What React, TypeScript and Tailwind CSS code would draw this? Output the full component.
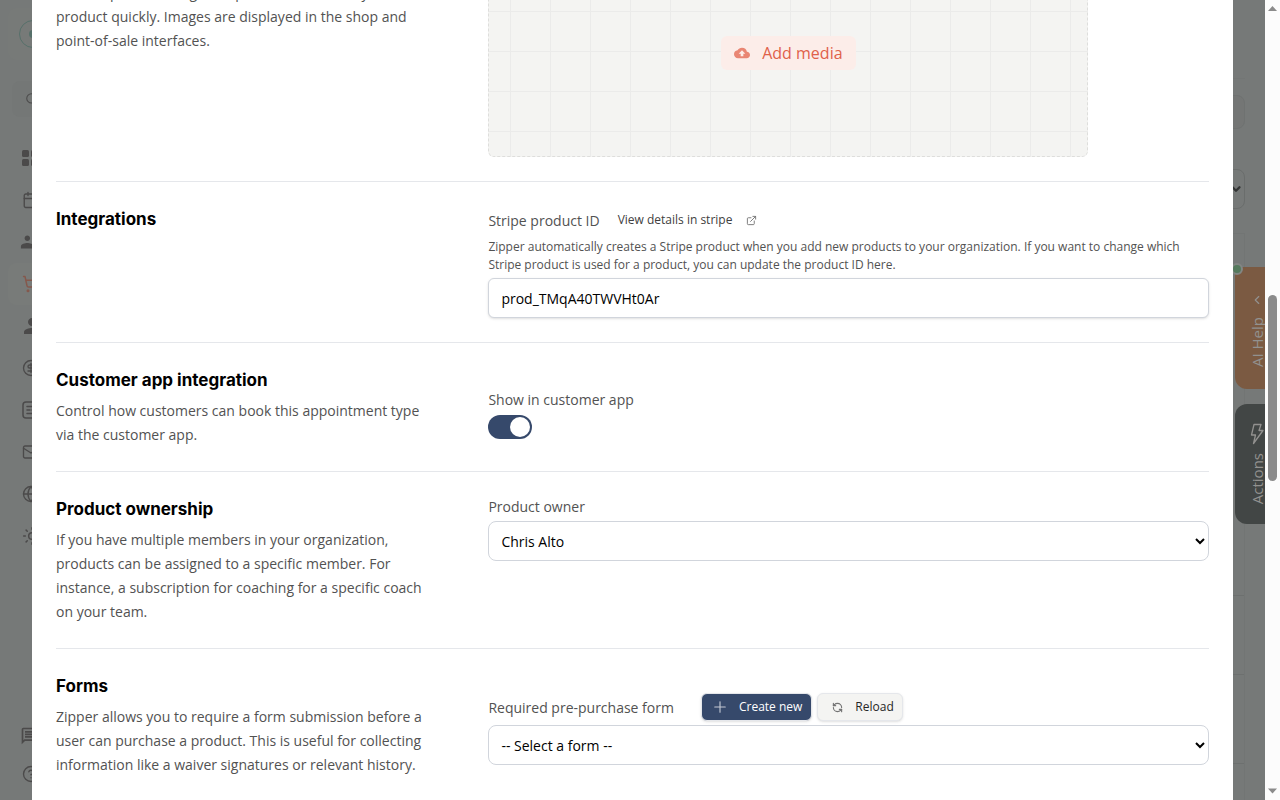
import React from 'react';
import {
  Calendar,
  ChevronDown,
  ChevronLeft,
  CircleDollarSign,
  CircleQuestionMark,
  Globe,
  Mail,
  Plus,
  RefreshCcw,
  Search,
  ShoppingCart,
  Sun,
} from 'lucide-react';
import { FiExternalLink } from 'react-icons/fi';
import { MdCloudUpload, MdGroup, MdOutlineMessage, MdPerson } from 'react-icons/md';

const GridIcon = () => (
  <svg width="18" height="18" viewBox="0 0 18 18" fill="currentColor">
    <rect x="0" y="1" width="7" height="7" rx="1.5" />
    <rect x="9" y="1" width="7" height="7" rx="1.5" />
    <rect x="0" y="10" width="7" height="7" rx="1.5" />
    <rect x="9" y="10" width="7" height="7" rx="1.5" />
  </svg>
);

const ListIcon = () => (
  <svg width="18" height="18" viewBox="0 0 18 18" fill="none" stroke="currentColor" strokeWidth="1.5">
    <rect x="1" y="1" width="16" height="16" rx="3" />
    <path d="M5 5.5h8M5 9h3M10 9h3M5 12.5h6" strokeLinecap="round" />
  </svg>
);

const BoltIcon = () => (
  <svg width="14" height="22" viewBox="0 0 14 22" fill="none" stroke="currentColor" strokeWidth="1.3" strokeLinejoin="round">
    <path d="M4 1.5h7L9 7.5h4L3.500 20.500 5.500 12H1.500z" />
  </svg>
);

const navItems = [
  { label: 'Dashboard', icon: <GridIcon /> },
  { label: 'Calendar', icon: <Calendar size={18} strokeWidth={1.8} /> },
  { label: 'Customers', icon: <MdGroup size={22} className="-ml-0.5" /> },
  { label: 'Products', icon: <ShoppingCart size={18} strokeWidth={2} />, active: true },
  { label: 'Team', icon: <MdPerson size={24} className="-ml-0.5" /> },
  { label: 'Payments', icon: <CircleDollarSign size={18} strokeWidth={1.8} /> },
  { label: 'Forms', icon: <ListIcon /> },
  { label: 'Messages', icon: <Mail size={18} strokeWidth={1.8} /> },
  { label: 'Website', icon: <Globe size={18} strokeWidth={1.8} /> },
  { label: 'Settings', icon: <Sun size={20} strokeWidth={1.8} /> },
];

const labelClass = 'text-sm leading-[21px] font-medium text-[#525252]';
const selectClass =
  'mt-1 block h-10 w-full rounded-lg border border-gray-300 bg-white px-2 text-sm text-black';

type SectionProps = {
  title: string;
  text?: string;
  className?: string;
  children: React.ReactNode;
};

const Section = ({ title, text, className = '', children }: SectionProps) => (
  <section className={`grid grid-cols-8 py-6 ${className}`}>
    <div className="col-span-3 pr-16">
      <h2 className="font-['Inter',sans-serif] text-[17px] leading-[26px] font-bold text-black">{title}</h2>
      {text && <p className="mt-1.5 text-sm leading-6 text-[#525252]">{text}</p>}
    </div>
    <div className="col-span-5">{children}</div>
  </section>
);

const Sidebar = () => (
  <nav className="flex w-64 shrink-0 flex-col px-2 pt-2 pb-[7px] text-[#4b4a4a]">
    <div className="flex h-[52px] items-center rounded-lg bg-[#777a78] pl-[11px]">
      <span className="flex size-7 items-center justify-center rounded-full border border-[#56706a]">
        <span className="size-2 rounded-full bg-[#56706a]" />
      </span>
    </div>
    <div className="mx-1 mt-[21px] flex h-9 items-center rounded-lg bg-[#747776] pl-[13px]">
      <Search size={14} strokeWidth={1.8} />
    </div>
    <ul className="mt-5">
      {navItems.map((item) => (
        <li
          key={item.label}
          className={
            item.active
              ? 'flex h-[42px] items-center rounded-lg bg-[#787b79] pl-3.5 text-[#85584c]'
              : 'flex h-[42px] items-center pl-3.5'
          }
        >
          {item.icon}
        </li>
      ))}
    </ul>
    <div className="mt-auto">
      <div className="flex h-[38px] items-center pl-3">
        <MdOutlineMessage size={20} />
      </div>
      <div className="flex h-[38px] items-center pl-3.5">
        <CircleQuestionMark size={18} strokeWidth={1.8} />
      </div>
    </div>
  </nav>
);

const PageBehind = () => (
  <main className="flex grow flex-col pr-5">
    <div className="h-[79px] border-b border-[#737675]" />
    <div className="mt-4 h-[34px] rounded-lg border border-[#6f7271] bg-[#747675]" />
    <div className="mt-10 flex h-10 items-center justify-end rounded-lg border border-[#6a6d6c] pr-px">
      <ChevronDown size={14} strokeWidth={4} className="text-[#333534]" />
    </div>
    <div className="mt-6 flex grow flex-col border-t border-r border-[#727574]">
      <div className="h-[362px] border-b border-[#6d706f]" />
      <div className="h-[79px] border-b border-[#6d706f]" />
      <div className="h-[89px] border-b border-[#6d706f]" />
    </div>
  </main>
);

const SideTabs = () => (
  <div className="absolute top-[267px] right-0 flex w-[30px] flex-col gap-[15px] text-[15px] leading-4 font-medium text-[#92918f]">
    <div className="relative flex h-[122px] flex-col items-center gap-2.5 rounded-bl-xl bg-[#7b5a42] pt-[26px] pl-3.5">
      <span className="absolute -top-1 -left-1 size-3 rounded-full border-2 border-[#838684] bg-[#557a5d]" />
      <ChevronLeft size={14} strokeWidth={2} />
      <span className="rotate-180 whitespace-nowrap [writing-mode:vertical-rl]">AI Help</span>
    </div>
    <div className="flex h-[120px] flex-col items-center gap-2 rounded-l-xl bg-[#424645] pt-[19px] pl-3.5">
      <BoltIcon />
      <span className="rotate-180 whitespace-nowrap [writing-mode:vertical-rl]">Actions</span>
    </div>
  </div>
);

const Scrollbar = () => (
  <div className="flex w-[15px] shrink-0 flex-col items-center bg-[#fcfcfc] text-[#8b8b8b]">
    <svg width="15" height="15" viewBox="0 0 15 15" fill="currentColor">
      <path d="M7.500 6l4.500 5H3z" />
    </svg>
    <div className="flex-[280_1_0%]" />
    <div className="w-[9px] flex-[186_1_0%] rounded-full bg-[#8b8b8b]" />
    <div className="flex-[304_1_0%]" />
    <svg width="15" height="15" viewBox="0 0 15 15" fill="currentColor">
      <path d="M7.500 8.500L3 3.500h9z" />
    </svg>
  </div>
);

const ProductModal = () => (
  <div
    role="dialog"
    aria-label="Edit product"
    className="absolute inset-x-8 inset-y-0 divide-y divide-gray-200 overflow-hidden bg-white px-6"
  >
    {/* scrolled part way down the form */}
    <Section
      title="Media"
      text="Custom product images help customers identify the product quickly. Images are displayed in the shop and point-of-sale interfaces."
      className="-mt-[75px]"
    >
      <div className="flex h-52 max-w-[600px] items-center justify-center rounded-md border border-dashed border-[#dededc] bg-[#f4f4f2] bg-[linear-gradient(to_right,#ebebea_1px,transparent_1px),linear-gradient(to_bottom,#ebebea_1px,transparent_1px)] bg-[length:40px_40px] bg-[position:21px_21px]">
        <button
          type="button"
          className="flex h-[34px] items-center gap-3 rounded-md bg-[#fcede9] px-[13px] font-medium text-[#e0614a]"
        >
          <MdCloudUpload size={16} className="text-[#e98673]" />
          Add media
        </button>
      </div>
    </Section>

    <Section title="Integrations">
      <div className="flex h-7 items-center">
        <label htmlFor="stripe-id" className={labelClass}>
          Stripe product ID
        </label>
        <a href="#stripe" className="ml-[18px] flex items-center gap-3.5 text-xs font-medium text-[#404040]">
          View details in stripe
          <FiExternalLink size={11} className="text-[#737373]" />
        </a>
      </div>
      <p className="mt-1 text-xs leading-[18px] text-[#525252]">
        Zipper automatically creates a Stripe product when you add new products to your organization. If you want to
        change which Stripe product is used for a product, you can update the product ID here.
      </p>
      <input
        id="stripe-id"
        type="text"
        defaultValue="prod_TMqA40TWVHt0Ar"
        className="mt-1 block h-10 w-full rounded-md border border-gray-300 bg-white px-3 text-sm text-black shadow-sm"
      />
    </Section>

    <Section
      title="Customer app integration"
      text="Control how customers can book this appointment type via the customer app."
    >
      <div className="flex flex-col items-start gap-[5px] pt-[22px]">
        <label htmlFor="show-in-app" className={labelClass}>
          Show in customer app
        </label>
        <input
          id="show-in-app"
          type="checkbox"
          role="switch"
          defaultChecked
          className="flex h-6 w-11 appearance-none items-center rounded-full bg-gray-300 p-0.5 before:size-5 before:rounded-full before:bg-white checked:justify-end checked:bg-[#36496b]"
        />
      </div>
    </Section>

    <Section
      title="Product ownership"
      text="If you have multiple members in your organization, products can be assigned to a specific member. For instance, a subscription for coaching for a specific coach on your team."
    >
      <label htmlFor="owner" className={`block ${labelClass}`}>
        Product owner
      </label>
      <select id="owner" className={selectClass}>
        <option>Chris Alto</option>
      </select>
    </Section>

    <Section
      title="Forms"
      text="Zipper allows you to require a form submission before a user can purchase a product. This is useful for collecting information like a waiver signatures or relevant history."
    >
      <div className="flex items-center gap-[5px] pt-5">
        <label htmlFor="form" className={`mr-[22px] ${labelClass}`}>
          Required pre-purchase form
        </label>
        <button
          type="button"
          className="flex h-7 items-center gap-[11px] rounded-md border border-gray-200 bg-[#36496b] pr-[9px] pl-2.5 text-xs font-medium text-white shadow-sm"
        >
          <Plus size={18} strokeWidth={1.5} className="-mx-px text-[#c3c8d3]" />
          Create new
        </button>
        <button
          type="button"
          className="flex h-7 items-center gap-3 rounded-md border border-gray-200 bg-[#f4f4f2] pr-2 pl-3.5 text-xs font-medium text-[#262626] shadow-sm"
        >
          <RefreshCcw size={11} strokeWidth={2.5} className="text-[#737373]" />
          Reload
        </button>
      </div>
      <select id="form" className={selectClass}>
        <option>-- Select a form --</option>
      </select>
    </Section>
  </div>
);

export default function App() {
  return (
    <div className="flex h-screen overflow-hidden font-['Open_Sans',sans-serif]">
      <div className="relative flex grow overflow-hidden bg-[#767978]">
        <Sidebar />
        <PageBehind />
        <SideTabs />
        <ProductModal />
      </div>
      <Scrollbar />
    </div>
  );
}
